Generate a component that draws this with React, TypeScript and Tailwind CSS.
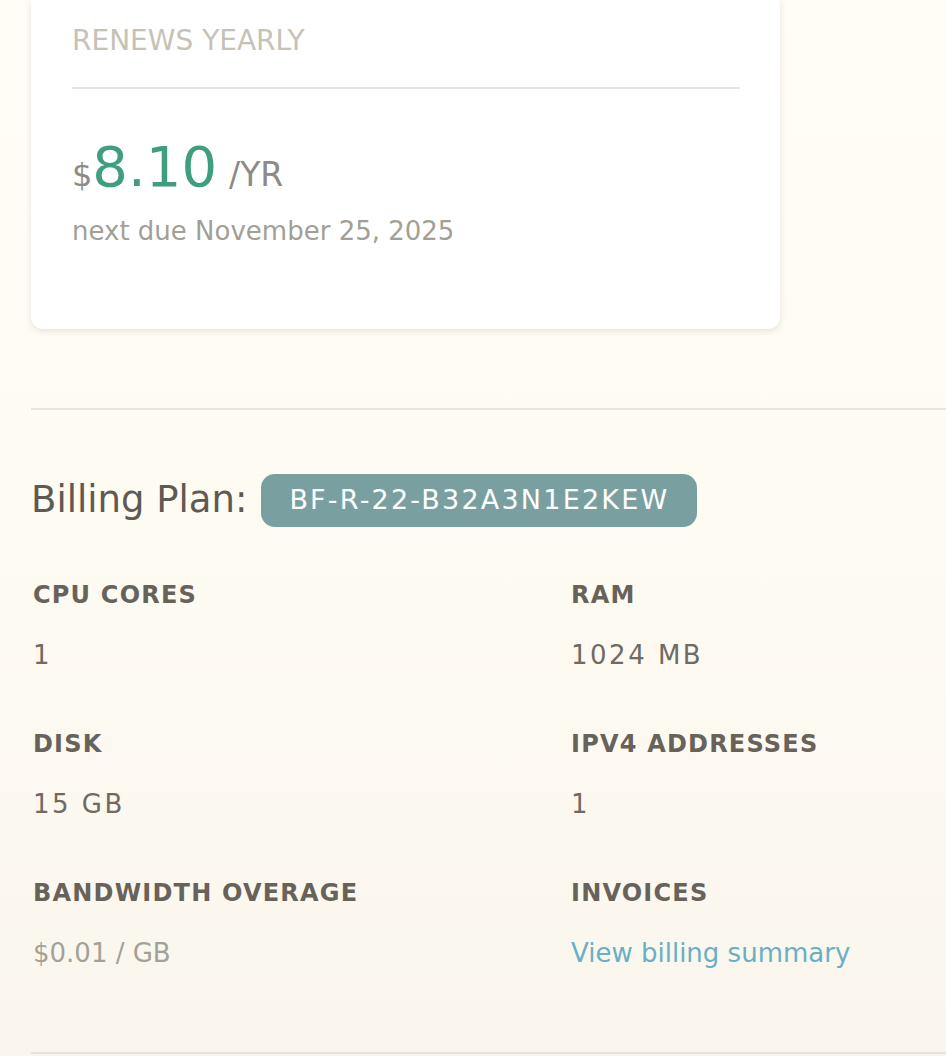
const font = { fontFamily: '"DejaVu Sans", "Noto Sans", sans-serif' };

const specs = [
  { label: 'CPU CORES', value: '1', num: true },
  { label: 'RAM', value: '1024 MB', num: true },
  { label: 'DISK', value: '15 GB', num: true },
  { label: 'IPV4 ADDRESSES', value: '1', num: true },
  { label: 'BANDWIDTH OVERAGE', value: '$0.01 / GB', muted: true },
  { label: 'INVOICES', value: 'View billing summary', link: true },
];

export default function App() {
  return (
    <div
      className="min-h-[1056px] w-[946px] overflow-hidden bg-gradient-to-b from-[#fffdf6] via-[#fefbf3] to-[#faf6ed]"
      style={font}
    >
      <div className="pl-[31px]">
        {/* renewal card */}
        <div className="w-[749px] rounded-b-xl bg-white pl-[41px] pr-[40px] pt-[26px] pb-[82px] shadow-[0_2px_6px_rgba(120,110,90,0.18)]">
          <div className="text-[28px] leading-[30px] text-[#c7c2b5]">RENEWS YEARLY</div>
          <div className="mt-[31px] h-[2px] bg-[#e7e5e1]" />
          <div className="mt-[46px] flex items-baseline text-[#8e8b85]">
            <span className="text-[32px]">$</span>
            <span className="text-[56px] leading-[64px] text-[#3f9e80]">8.10</span>
            <span className="ml-[12px] text-[33px]">/YR</span>
          </div>
          <div className="mt-[15px] text-[26px] leading-[32px] text-[#a29f97]">next due November 25, 2025</div>
        </div>

        <div className="mt-[79px] h-[2px] bg-[#e8e5de]" />

        <div className="mt-[64px] flex items-center gap-[14px]">
          <span className="text-[37px] leading-[46px] text-[#5d5a53]">Billing Plan:</span>
          <span className="flex h-[53px] items-center rounded-[14px] bg-[#7a9fa0] px-[28px] text-[27px] tracking-[2.2px] text-white">
            BF-R-22-B32A3N1E2KEW
          </span>
        </div>

        <div className="mt-[52px] grid grid-cols-[538px_1fr] gap-y-[57px] pl-[2px]">
          {specs.map((s) => (
            <div key={s.label}>
              <div className="text-[24px] leading-[32px] font-bold tracking-[1.2px] text-[#67625a]">{s.label}</div>
              <div
                className={
                  'mt-[28px] text-[26px] leading-[32px] ' +
                  (s.num ? 'tracking-[2.5px] ' : '') +
                  (s.link ? 'text-[24.5px] text-[#6aafc5]' : s.muted ? 'text-[#a4a198]' : 'text-[#6f6b64]')
                }
              >
                {s.value}
              </div>
            </div>
          ))}
        </div>

        <div className="mt-[83px] h-[2px] bg-[#e6e2d9]" />
      </div>
    </div>
  );
}
